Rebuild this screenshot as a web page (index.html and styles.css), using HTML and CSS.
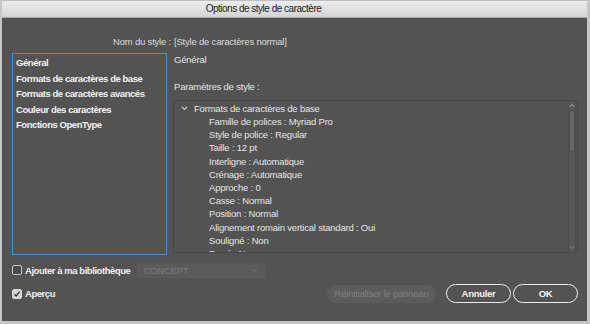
FILE: index.html
```html
<!DOCTYPE html>
<html lang="fr">
<head>
<meta charset="utf-8">
<link rel="stylesheet" href="styles.css">
</head>
<body>
<div class="window">
  <div class="titlebar">Options de style de caractère</div>
  <div class="content">
    <div class="name-row">
      <span class="name-label">Nom du style :</span>
      <span class="name-value">[Style de caractères normal]</span>
    </div>
    <div class="main">
      <ul class="cat-list">
        <li>Général</li>
        <li>Formats de caractères de base</li>
        <li>Formats de caractères avancés</li>
        <li>Couleur des caractères</li>
        <li>Fonctions OpenType</li>
      </ul>
      <div class="right">
        <div class="section-title">Général</div>
        <div class="params-title">Paramètres de style :</div>
        <div class="tree">
          <div class="tree-content">
            <div class="tree-group">
              <svg class="chev" width="7" height="5" viewBox="0 0 7 5"><path d="M1 1 L3.5 3.5 L6 1" fill="none" stroke="#cfcfcf" stroke-width="1.1"/></svg>
              <span>Formats de caractères de base</span>
            </div>
            <div class="tree-item">Famille de polices : Myriad Pro</div>
            <div class="tree-item">Style de police : Regular</div>
            <div class="tree-item">Taille : 12 pt</div>
            <div class="tree-item">Interligne : Automatique</div>
            <div class="tree-item">Crénage : Automatique</div>
            <div class="tree-item">Approche : 0</div>
            <div class="tree-item">Casse : Normal</div>
            <div class="tree-item">Position : Normal</div>
            <div class="tree-item">Alignement romain vertical standard : Oui</div>
            <div class="tree-item">Souligné : Non</div>
            <div class="tree-item">Barré : Non</div>
          </div>
          <div class="scrollbar">
            <svg class="arrow" width="8" height="7" viewBox="0 0 8 7"><path d="M1.5 5 L4 2.5 L6.5 5" fill="none" stroke="#a8a8a8" stroke-width="1"/></svg>
            <div class="thumb"></div>
            <div class="track-rest"></div>
            <svg class="arrow" width="8" height="7" viewBox="0 0 8 7"><path d="M1.5 2 L4 4.5 L6.5 2" fill="none" stroke="#8a8a8a" stroke-width="1"/></svg>
          </div>
        </div>
      </div>
    </div>
    <div class="row-lib">
      <span class="checkbox"></span>
      <span class="check-label">Ajouter à ma bibliothèque</span>
      <div class="dropdown">
        <span>CONCEPT</span>
        <svg width="7" height="5" viewBox="0 0 7 5"><path d="M1 1 L3.5 3.5 L6 1" fill="none" stroke="#757575" stroke-width="1"/></svg>
      </div>
    </div>
    <div class="row-bottom">
      <span class="checkbox checked"><svg width="8" height="8" viewBox="0 0 8 8"><path d="M1.5 4.2 L3.2 6 L6.6 1.6" fill="none" stroke="#3a3a3a" stroke-width="1.4"/></svg></span>
      <span class="check-label">Aperçu</span>
      <div class="spacer"></div>
      <button class="btn btn-disabled">Réinitialiser le panneau</button>
      <button class="btn btn-outline btn-cancel">Annuler</button>
      <button class="btn btn-outline btn-ok">OK</button>
    </div>
  </div>
</div>
</body>
</html>
```
FILE: styles.css
```css
* { box-sizing: border-box; }
html, body { margin: 0; padding: 0; }
body {
  width: 590px;
  height: 324px;
  overflow: hidden;
  font-family: "Liberation Sans", Arial, sans-serif;
  font-size: 9.5px;
  letter-spacing: -0.2px;
  color: #e4e4e4;
  background: #c9c9c9;
}
.window {
  width: 590px;
  height: 324px;
  background: #535353;
  border-left: 2px solid #c6c6c6;
  border-right: 3px solid #c6c6c6;
  border-bottom: 3px solid #c6c6c6;
  display: flex;
  flex-direction: column;
}
.titlebar {
  height: 18px;
  background: linear-gradient(#ededed, #d4d4d4);
  border-top: 1px solid #bdbdbd;
  border-bottom: 1px solid #a9a9a9;
  text-align: center;
  padding-right: 62px;
  line-height: 16px;
  font-size: 10px;
  letter-spacing: -0.5px;
  color: #222;
}
.content {
  padding: 0 9px 0 10px;
  display: flex;
  flex-direction: column;
}
.name-row {
  margin-top: 17px;
  display: flex;
  line-height: 13px;
  color: #dcdcdc;
}
.name-label {
  width: 159px;
  text-align: right;
  margin-right: 3px;
}
.main {
  margin-top: 5px;
  display: grid;
  grid-template-columns: 155px 1fr;
  column-gap: 6px;
}
.cat-list {
  list-style: none;
  margin: 0;
  padding: 1px 0 0 3px;
  height: 202px;
  border: 1px solid #4a8dd6;
  font-weight: bold;
  letter-spacing: -0.45px;
  color: #f2f2f2;
}
.cat-list li { line-height: 15.5px; }
.right {
  display: flex;
  flex-direction: column;
}
.section-title {
  line-height: 14px;
  padding-left: 1px;
}
.params-title {
  margin-top: 13px;
  line-height: 14px;
  padding-left: 1px;
}
.tree {
  margin-top: 6px;
  height: 153px;
  border: 1px solid #474747;
  border-radius: 2px;
  display: flex;
  overflow: hidden;
}
.tree-content {
  flex: 1;
  overflow: hidden;
}
.tree-group {
  display: flex;
  align-items: center;
  height: 14px;
  padding-left: 7px;
}
.chev { margin-right: 6px; margin-top: 1px; }
.tree-item {
  line-height: 13.2px;
  padding-left: 35px;
  white-space: nowrap;
}
.scrollbar {
  width: 8px;
  margin-right: 1px;
  display: flex;
  flex-direction: column;
  align-items: center;
  background: #575757;
  border-left: 1px solid #4d4d4d;
  border-right: 1px solid #4d4d4d;
}
.arrow { flex: none; margin: 1px 0; }
.thumb {
  width: 6px;
  height: 42px;
  background: #676767;
  border: 1px solid #4b4b4b;
  border-radius: 3px;
}
.track-rest { flex: 1; }
.row-lib {
  margin-top: 7px;
  height: 16px;
  display: flex;
  align-items: center;
}
.checkbox {
  width: 10px;
  height: 10px;
  border: 1px solid #c4c4c4;
  border-radius: 2px;
  background: #4a4a4a;
  display: inline-flex;
  align-items: center;
  justify-content: center;
  flex: none;
}
.checkbox.checked {
  background: #d6d6d6;
  border-color: #d6d6d6;
}
.check-label {
  margin-left: 3px;
  font-weight: bold;
  letter-spacing: -0.45px;
  color: #f0f0f0;
}
.dropdown {
  margin-left: 7px;
  width: 128px;
  height: 15px;
  background: #5a5a5a;
  border-radius: 2px;
  display: flex;
  align-items: center;
  justify-content: space-between;
  padding: 0 7px 0 6px;
  color: #7b7b7b;
}
.row-bottom {
  margin-top: 6px;
  height: 19px;
  display: flex;
  align-items: center;
}
.spacer { flex: 1; }
.btn {
  font-family: "Liberation Sans", Arial, sans-serif;
  font-size: 9.5px;
  letter-spacing: -0.2px;
  padding: 0;
  margin: 0;
  cursor: default;
}
.btn-disabled {
  width: 109px;
  height: 18px;
  border: none;
  border-radius: 9px;
  background: #5c5c5c;
  color: #808080;
}
.btn-outline {
  height: 19px;
  border: 1.5px solid #ececec;
  border-radius: 10px;
  background: #535353;
  color: #f4f4f4;
  font-weight: bold;
  letter-spacing: -0.3px;
}
.btn-cancel { width: 65px; margin-left: 10px; }
.btn-ok { width: 65px; margin-left: 2px; }
```
